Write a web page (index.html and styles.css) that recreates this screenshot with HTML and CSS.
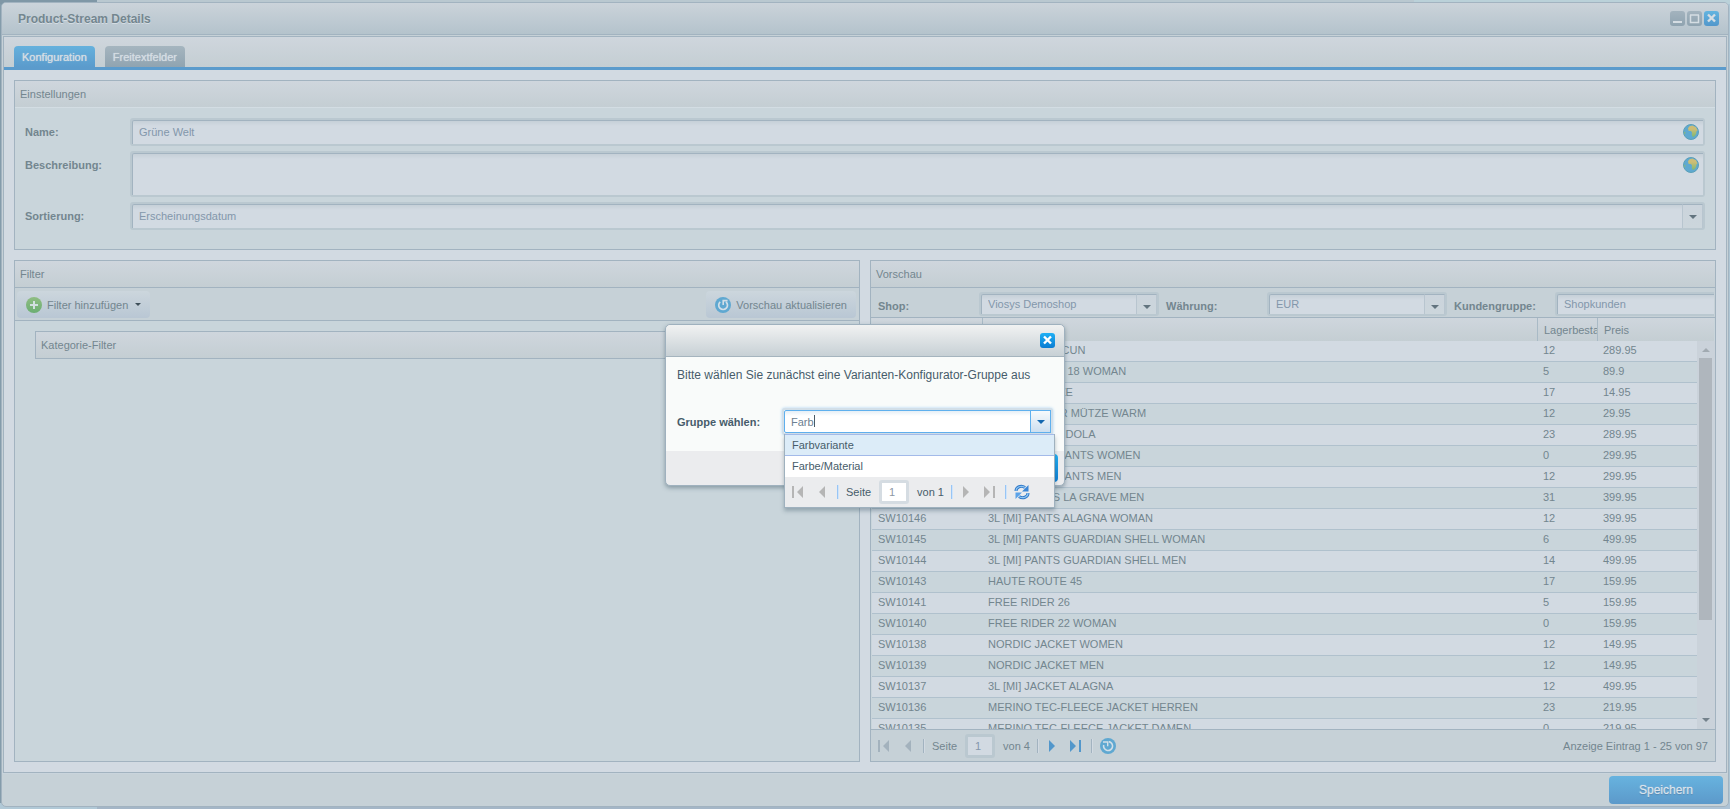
FILE: index.html
```html
<!DOCTYPE html>
<html lang="de">
<head>
<meta charset="utf-8">
<title>Product-Stream Details</title>
<link rel="stylesheet" href="styles.css">
</head>
<body>
<svg class="defs" aria-hidden="true">
  <defs>
    <linearGradient id="land" x1="0" y1="0" x2="0" y2="1"><stop offset="0.3" stop-color="#cdbd76"/><stop offset="1" stop-color="#7fb873"/></linearGradient>
    <linearGradient id="plusFill" x1="0" y1="0" x2="0" y2="1"><stop offset="0" stop-color="#8fbd83"/><stop offset="1" stop-color="#6bae72"/></linearGradient>
    <symbol id="globe" viewBox="0 0 16 16">
      <circle cx="8" cy="8" r="7.5" fill="#5fa9d0" stroke="#5b9fb8"/>
      <path d="M5 4.2 6.5 2.2 9.5 1.6 13 3.2 14.6 6.4 13.4 7.6 13.2 9.8 11.4 12.6 9.8 13 8.8 11 9 8.2 7.8 7 5.6 7Z" fill="url(#land)"/>
      <path d="M.8 7.4 2.6 8.4 1.8 11Z" fill="#86b880"/>
    </symbol>
    <symbol id="plus" viewBox="0 0 16 16"><circle cx="8" cy="8" r="8" fill="url(#plusFill)"/><path d="M8 4v8M4 8h8" stroke="#d2dfe0" stroke-width="2"/></symbol>
    <symbol id="reload" viewBox="0 0 16 16"><circle cx="8" cy="8" r="8" fill="#5fa8d1"/><path d="M11 4.800A4.400 4.400 0 1 1 5.200 4.800" fill="none" stroke="#d2dfe8" stroke-width="1.700"/><path d="M7.400 8V2.800h5.200v1.600H9V8z" fill="#d2dfe8"/></symbol>
    <symbol id="reload-left" viewBox="0 0 16 16"><circle cx="8" cy="8" r="8" fill="#5fa8d1"/><path d="M8.800 3.600A4.500 4.500 0 1 1 3.700 7" fill="none" stroke="#d2dfe8" stroke-width="1.600"/><path d="M3 3.200h5.400v5H7V4.800H3z" fill="#d2dfe8"/></symbol>
    <symbol id="down" viewBox="0 0 8 4"><path d="M0 0h8L4 4z" fill="currentColor"/></symbol>
    <symbol id="up" viewBox="0 0 8 4"><path d="M0 4h8L4 0z" fill="currentColor"/></symbol>
    <symbol id="first" viewBox="0 0 12 12"><path d="M0 0h2v12H0zM11 0v12L5 6z" fill="currentColor"/></symbol>
    <symbol id="prev" viewBox="0 0 12 12"><path d="M9 0v12L3 6z" fill="currentColor"/></symbol>
    <symbol id="next" viewBox="0 0 12 12"><path d="M3 0v12l6-6z" fill="currentColor"/></symbol>
    <symbol id="last" viewBox="0 0 12 12"><path d="M0 0v12l6-6zM9 0h2v12H9z" fill="currentColor"/></symbol>
    <symbol id="close" viewBox="0 0 15 15"><path d="M4 3.500 11 10.500M11 3.500 4 10.500" stroke="currentColor" stroke-width="2.400"/></symbol>
    <symbol id="cycle" viewBox="0 0 16 16">
      <path d="M2 7C2 3 7 .8 11 3.600" fill="none" stroke="#2f78c8" stroke-width="3"/><path d="M2 7C2 3 7 .8 11 3.600" fill="none" stroke="#8cc4f2" stroke-width="1.200"/>
      <path d="M14.500 1v6.500H8z" fill="#3b86d6"/>
      <path d="M14 9c0 4-5 6.200-9 3.400" fill="none" stroke="#2f78c8" stroke-width="3"/><path d="M14 9c0 4-5 6.200-9 3.400" fill="none" stroke="#8cc4f2" stroke-width="1.200"/>
      <path d="M1.500 15V8.500H8z" fill="#5ba2e8"/>
    </symbol>
  </defs>
</svg>

<main class="window">
  <header class="titlebar">
    <h1 class="title">Product-Stream Details</h1>
    <button class="tool" aria-label="Minimieren"><svg viewBox="0 0 15 15"><path d="M3 11h9" stroke="currentColor" stroke-width="2"/></svg></button>
    <button class="tool" aria-label="Maximieren"><svg viewBox="0 0 15 15"><path d="M3 4h9M3.500 4v7.500h8V4" fill="none" stroke="currentColor" stroke-width="1.500"/></svg></button>
    <button class="tool tool-close" aria-label="Schließen"><svg><use href="#close"/></svg></button>
  </header>

  <div class="content">
    <nav class="tabs">
      <button class="tab tab-active">Konfiguration</button>
      <button class="tab">Freitextfelder</button>
    </nav>
    <div class="page">
      <section class="panel settings">
        <h2 class="panel-head">Einstellungen</h2>
        <form class="form">
          <label for="name">Name:</label>
          <div class="field"><input id="name" type="text" value="Grüne Welt"><svg class="globe"><use href="#globe"/></svg></div>
          <label for="desc">Beschreibung:</label>
          <div class="field field-area"><textarea id="desc"></textarea><svg class="globe"><use href="#globe"/></svg></div>
          <label for="sort">Sortierung:</label>
          <div class="field"><select id="sort"><option>Erscheinungsdatum</option></select><span class="trigger"><svg><use href="#down"/></svg></span></div>
        </form>
      </section>

      <div class="columns">
        <section class="panel">
          <h2 class="panel-head">Filter</h2>
          <div class="toolbar">
            <button class="tbtn"><svg class="icon"><use href="#plus"/></svg>Filter hinzufügen<svg class="caret"><use href="#down"/></svg></button>
            <button class="tbtn"><svg class="icon"><use href="#reload"/></svg>Vorschau aktualisieren</button>
          </div>
          <div class="filters"><h3 class="panel-head filter-item">Kategorie-Filter</h3></div>
        </section>

        <section class="panel preview">
          <h2 class="panel-head">Vorschau</h2>
          <div class="selectors">
            <label for="shop">Shop:</label>
            <div class="field"><select id="shop"><option>Viosys Demoshop</option></select><span class="trigger"><svg><use href="#down"/></svg></span></div>
            <label for="currency">Währung:</label>
            <div class="field"><select id="currency"><option>EUR</option></select><span class="trigger"><svg><use href="#down"/></svg></span></div>
            <label for="group">Kundengruppe:</label>
            <div class="field field-cut"><select id="group"><option>Shopkunden</option></select></div>
          </div>
          <div class="grid">
            <table>
              <colgroup><col class="c-num"><col><col class="c-stock"><col class="c-price"></colgroup>
              <thead><tr><th>Nummer</th><th>Name</th><th>Lagerbestand</th><th>Preis</th></tr></thead>
              <tbody>
                <tr><td>SW10154</td><td>LS TOUR CANCUN</td><td>12</td><td>289.95</td></tr>
                <tr><td>SW10153</td><td>CROSS RIDER 18 WOMAN</td><td>5</td><td>89.9</td></tr>
                <tr><td>SW10152</td><td>MERINO MÜTZE</td><td>17</td><td>14.95</td></tr>
                <tr><td>SW10151</td><td>3L [MI] WINTER MÜTZE WARM</td><td>12</td><td>29.95</td></tr>
                <tr><td>SW10150</td><td>JACKETS GONDOLA</td><td>23</td><td>289.95</td></tr>
                <tr><td>SW10149</td><td>3L [MI] TOUR PANTS WOMEN</td><td>0</td><td>299.95</td></tr>
                <tr><td>SW10148</td><td>3L [MI] TOUR PANTS MEN</td><td>12</td><td>299.95</td></tr>
                <tr><td>SW10147</td><td>3L [MI] PANTS LA GRAVE MEN</td><td>31</td><td>399.95</td></tr>
                <tr><td>SW10146</td><td>3L [MI] PANTS ALAGNA WOMAN</td><td>12</td><td>399.95</td></tr>
                <tr><td>SW10145</td><td>3L [MI] PANTS GUARDIAN SHELL WOMAN</td><td>6</td><td>499.95</td></tr>
                <tr><td>SW10144</td><td>3L [MI] PANTS GUARDIAN SHELL MEN</td><td>14</td><td>499.95</td></tr>
                <tr><td>SW10143</td><td>HAUTE ROUTE 45</td><td>17</td><td>159.95</td></tr>
                <tr><td>SW10141</td><td>FREE RIDER 26</td><td>5</td><td>159.95</td></tr>
                <tr><td>SW10140</td><td>FREE RIDER 22 WOMAN</td><td>0</td><td>159.95</td></tr>
                <tr><td>SW10138</td><td>NORDIC JACKET WOMEN</td><td>12</td><td>149.95</td></tr>
                <tr><td>SW10139</td><td>NORDIC JACKET MEN</td><td>12</td><td>149.95</td></tr>
                <tr><td>SW10137</td><td>3L [MI] JACKET ALAGNA</td><td>12</td><td>499.95</td></tr>
                <tr><td>SW10136</td><td>MERINO TEC-FLEECE JACKET HERREN</td><td>23</td><td>219.95</td></tr>
                <tr><td>SW10135</td><td>MERINO TEC-FLEECE JACKET DAMEN</td><td>0</td><td>219.95</td></tr>
              </tbody>
            </table>
            <div class="scrollbar"><svg class="sb-up"><use href="#up"/></svg><div class="thumb"></div><svg class="sb-down"><use href="#down"/></svg></div>
          </div>
          <footer class="pager">
            <button aria-label="Erste Seite"><svg><use href="#first"/></svg></button>
            <button aria-label="Vorherige Seite"><svg><use href="#prev"/></svg></button>
            <i></i>
            <label for="page">Seite</label>
            <input id="page" type="text" value="1">
            <span>von 4</span>
            <i></i>
            <button class="on" aria-label="Nächste Seite"><svg><use href="#next"/></svg></button>
            <button class="on" aria-label="Letzte Seite"><svg><use href="#last"/></svg></button>
            <i></i>
            <button aria-label="Aktualisieren"><svg class="icon"><use href="#reload-left"/></svg></button>
            <span class="count">Anzeige Eintrag 1 - 25 von 97</span>
          </footer>
        </section>
      </div>
    </div>
  </div>
  <footer class="actions"><button class="save">Speichern</button></footer>
</main>

<div class="dialog" role="dialog" aria-label="Gruppe wählen">
  <header class="dialog-head"><button class="tool tool-close" aria-label="Schließen"><svg><use href="#close"/></svg></button></header>
  <div class="dialog-body">
    <p>Bitte wählen Sie zunächst eine Varianten-Konfigurator-Gruppe aus</p>
    <div class="combo-row">
      <label class="combo-label" for="variant">Gruppe wählen:</label>
      <div class="combo">
        <div class="combo-box"><input id="variant" type="text" value="Farb"><span class="cursor"></span><button aria-label="Auswahl öffnen"><svg><use href="#down"/></svg></button></div>
        <div class="list">
          <ul><li class="hover">Farbvariante</li><li>Farbe/Material</li></ul>
          <div class="pager pager-list">
            <button aria-label="Erste Seite"><svg><use href="#first"/></svg></button>
            <button aria-label="Vorherige Seite"><svg><use href="#prev"/></svg></button>
            <i></i>
            <label for="lpage">Seite</label>
            <input id="lpage" type="text" value="1">
            <span>von 1</span>
            <i></i>
            <button aria-label="Nächste Seite"><svg><use href="#next"/></svg></button>
            <button aria-label="Letzte Seite"><svg><use href="#last"/></svg></button>
            <i></i>
            <button aria-label="Aktualisieren"><svg class="icon"><use href="#cycle"/></svg></button>
          </div>
        </div>
      </div>
    </div>
  </div>
  <footer class="dialog-foot"><button class="ok" aria-label="Übernehmen"></button></footer>
</div>
</body>
</html>
```
FILE: styles.css
```css
* { box-sizing: border-box; }
html { height: 100%; }
body {
  height: 100%;
  margin: 0;
  padding: 2px 1px 2px;
  background: linear-gradient(90deg, #7f97a6 0 97px, #b9c8d0 97px 1414px, #bad1d9 1414px) top / 100% 4px no-repeat,
    linear-gradient(90deg, #b1c9d7 0 97px, #a4b6c7 97px 1630px, #adc3d6 1630px) bottom / 100% 6px no-repeat,
    linear-gradient(90deg, #849cab 0 50%, #aec6d4 50%);
  font: 11px/14px "Liberation Sans", Arial, sans-serif;
  color: #73868f;
  overflow: hidden;
}
.defs { position: absolute; width: 0; height: 0; }
button, input, select, textarea { font: inherit; color: inherit; margin: 0; padding: 0; border: 0; background: none; outline: 0; }
svg { display: block; flex: none; }
h1, h2, h3, p, ul { margin: 0; padding: 0; font-size: 11px; font-weight: normal; list-style: none; }
.icon { width: 16px; height: 16px; }

.window {
  display: flex;
  flex-direction: column;
  height: 100%;
  border: 1px solid #a2b3c0;
  border-radius: 5px;
  background: #c6d1d7;
  overflow: hidden;
}
.titlebar {
  display: flex;
  align-items: center;
  gap: 2px;
  flex: none;
  height: 32px;
  padding: 0 9px 0 16px;
  border-bottom: 1px solid #a2b3c0;
  background: linear-gradient(#cbd3da, #b4c3cc);
}
.title { flex: 1; font-size: 12px; font-weight: bold; text-shadow: 0 1px #d5dde3; }
.tool {
  width: 15px;
  height: 15px;
  border-radius: 3px;
  background: linear-gradient(#a3b3be, #8fa3b0);
  color: #d5dde3;
}
.tool svg { width: 15px; height: 15px; }
.tool-close { background: linear-gradient(#62b4e0, #5297cb); }
.content {
  display: flex;
  flex-direction: column;
  flex: 1;
  min-height: 0;
  margin: 1px 1px 0;
  border: 1px solid #a2b3c0;
  background: #d2dae2;
}
.tabs {
  display: flex;
  align-items: flex-end;
  gap: 10px;
  flex: none;
  height: 33px;
  padding: 0 10px;
  border-bottom: 3px solid #5b9bcc;
  background: linear-gradient(#cfd6dd, #c4ced3);
}
.tab {
  height: 21px;
  padding: 0 8px;
  border-radius: 4px 4px 0 0;
  background: linear-gradient(#a5b5bf, #90a4b1);
  color: #d5dde3;
  text-shadow: 0 0 1px #d5dde3;
}
.tab-active { background: linear-gradient(#65b1dd, #5b9bcc); }
.page { display: flex; flex-direction: column; gap: 10px; flex: 1; min-height: 0; padding: 10px; }
.panel { display: flex; flex-direction: column; min-width: 0; border: 1px solid #a2b3c0; background: #c9d5db; overflow: hidden; }
.panel-head {
  flex: none;
  height: 27px;
  padding: 0 5px;
  border-bottom: 1px solid #a2b3c0;
  background: linear-gradient(#cfd6dd, #c4ced3);
  line-height: 27px;
}
.settings .panel-head { border-color: #d3dde3; }
.form { display: grid; grid-template-columns: 95px 1fr; gap: 5px 10px; padding: 10px 10px 19px; }
.form label, .selectors label, .combo-label { font-weight: bold; }
.form label { padding-top: 7px; }
.field { display: flex; height: 28px; border: 2px solid #bac8d0; border-radius: 3px; background: #d2dae2; color: #8397ab; }
.field-area { height: 46px; }
.field input, .field select, .field textarea {
  flex: 1;
  min-width: 0;
  padding: 0 6px 2px;
  border: 1px solid #a2b3c0;
  border-width: 1px 0 0 1px;
  border-radius: 2px 0 0 0;
  background: linear-gradient(#c6d0d8, #d2dae2 5px);
  appearance: none;
  resize: none;
}
.globe { width: 16px; height: 16px; margin: 4px 4px 0 0; }
.field input + .globe, .field textarea + .globe { margin-left: -20px; }
.trigger {
  display: flex;
  align-items: center;
  justify-content: center;
  width: 21px;
  margin-left: -1px;
  border: 1px solid #b8c5cf;
  border-width: 1px 1px 0;
  border-top-color: #a2b3c0;
  background: linear-gradient(#cbd4dc, #ccd6dc);
  color: #62747f;
}
.trigger svg { width: 8px; height: 4px; }
.columns { display: grid; grid-template-columns: 1fr 1fr; gap: 10px; flex: 1; min-height: 0; }
.toolbar { display: flex; justify-content: space-between; flex: none; height: 33px; padding: 3px 3px 3px 2px; border-bottom: 1px solid #a2b3c0; background: #c6d1d7; }
.tbtn { display: flex; align-items: center; gap: 5px; height: 27px; padding: 0 9px; border-radius: 4px; background: linear-gradient(#ccd6dd, #b9c7d4); }
.caret { width: 6px; height: 3px; margin-left: 2px; color: #3e4f59; }
.filters { padding: 10px 10px 10px 20px; }
.filter-item { height: 28px; border: 1px solid #a2b3c0; line-height: 26px; }

.selectors {
  display: grid;
  grid-template-columns: 94px 180px 94px 180px 94px 1fr;
  column-gap: 7px;
  flex: none;
  height: 30px;
  padding: 4px 1px 0 7px;
  border-bottom: 1px solid #a2b3c0;
  background: #c6d1d7;
}
.selectors label { padding-top: 7px; }
.selectors .field { height: 24px; }
.selectors .trigger { padding-top: 5px; }
.field-cut { border-right: 0; border-radius: 3px 0 0 3px; }
.grid { position: relative; flex: 1; min-height: 0; padding: 0 1px; overflow: hidden; }
table { width: 100%; border-collapse: separate; border-spacing: 0; table-layout: fixed; }
.c-num { width: 110px; }
.c-stock { width: 60px; }
.c-price { width: 117px; }
th, td { overflow: hidden; padding: 0 6px; text-align: left; font-weight: normal; white-space: nowrap; }
th { height: 23px; border-left: 1px solid #a9bac6; background: linear-gradient(#cfd6dd, #c4ced3); }
th:nth-child(3) { padding-right: 0; }
th:first-child { border-left: 0; }
td { height: 21px; padding-bottom: 2px; border-bottom: 1px solid #b0c1cd; background: #d2dae2; }
tr:nth-child(even) td { background: #c9d5db; }
.scrollbar {
  position: absolute;
  top: 23px;
  right: 0;
  bottom: 0;
  display: flex;
  flex-direction: column;
  width: 18px;
  padding: 7px 3px 7px 2px;
  background: #cad2da;
  color: #a1aab1;
}
.scrollbar svg { width: 8px; height: 4px; margin-left: 3px; }
.thumb { height: 262px; margin: 6px 0 auto; background: #afb6bd; }
.sb-down { color: #74828c; }

.pager { display: flex; align-items: center; flex: none; height: 32px; padding: 0 7px; border-top: 1px solid #a2b3c0; background: #c6d1d7; white-space: nowrap; }
.pager button { margin-right: 9px; color: #a3b2bd; }
.pager button + button { margin-left: 3px; }
.pager button svg:not(.icon) { width: 12px; height: 12px; }
.pager .on { color: #5297cb; }
.pager i { width: 2px; height: 14px; margin-right: 7px; border-left: 1px solid #a2b3c0; border-right: 1px solid #d2dae2; }
.pager input { width: 30px; height: 24px; margin: 0 8px; padding: 0 7px; border: 3px solid #bac8d0; border-radius: 3px; background: #d2dae2; color: #8397ab; }
.pager span { margin-right: 7px; }
.pager .count { margin: 0 0 0 auto; }
.actions { display: flex; justify-content: flex-end; flex: none; height: 33px; padding: 2px 5px; border-top: 1px solid #c9d4dc; }
.save { width: 114px; height: 28px; border-radius: 4px; background: linear-gradient(#67b3df, #5c99ca); color: #dbe4ec; font-size: 12px; text-shadow: 0 1px 1px #5283ad, 0 0 1px #dbe4ec; }

.dialog {
  position: absolute;
  top: 324px;
  left: calc(50% - 200px);
  width: 400px;
  border: 1px solid #9fb1be;
  border-radius: 5px;
  background: #ebecee;
  color: #475c6a;
  box-shadow: 0 2px 4px rgba(70, 95, 110, 0.5);
}
.dialog-head {
  display: flex;
  align-items: center;
  justify-content: flex-end;
  height: 32px;
  padding: 0 9px;
  border-bottom: 1px solid #a5b4be;
  border-radius: 5px 5px 0 0;
  background: linear-gradient(#f1f2f2, #c7d0d5);
}
.dialog .tool-close { background: linear-gradient(#1fb0f5, #0a7cd2); color: #fff; }
.dialog-body { height: 94px; padding: 11px 11px 0; background: #f9fbfa; }
.dialog-body p { font-size: 12px; line-height: 15px; }
.combo-row { display: flex; justify-content: space-between; margin-top: 25px; }
.combo-label { padding-top: 7px; }
.combo { position: relative; width: 271px; }
.combo-box { display: flex; height: 27px; border: 2px solid #d3dfe8; border-radius: 3px; background: #fff; box-shadow: 0 0 3px #a9d2f3; }
.combo-box input { width: 247px; padding: 0 6px; border: 1px solid #5fb0ee; border-radius: 2px 0 0 2px; background: linear-gradient(#e6eff6, #fff 5px); color: #6d7f92; }
.combo-box button { display: flex; align-items: center; justify-content: center; flex: 1; margin-left: -1px; border: 1px solid #5fb0ee; background: linear-gradient(#f7fafc, #cddff0); color: #1468b0; }
.combo-box button svg { width: 8px; height: 4px; }
.cursor { position: absolute; left: 32px; top: 7px; width: 1px; height: 12px; background: #4a5a66; }
.list { position: absolute; top: 26px; left: 2px; width: 271px; border: 1px solid #9fb1be; border-top: 0; background: #fff; box-shadow: 0 3px 4px rgba(70, 95, 110, 0.4); z-index: 1; }
.list li { height: 21px; padding: 0 7px; line-height: 21px; }
.list .hover { height: 22px; border-top: 1px solid #a3bae9; border-bottom: 1px solid #a3bae9; background: #dcecf8; line-height: 20px; }
.pager-list { height: 30px; border-top: 0; background: #ebecee; color: #475c6a; }
.pager-list button { color: #b5b5b5; }
.pager-list i { border-left-color: #98c5f5; border-right-color: #d0e4fa; }
.pager-list input { border-color: #d5dce2; background: #fff; color: #8c98a3; }
.dialog-foot { display: flex; justify-content: flex-end; height: 34px; padding: 3px 6px; }
.ok { width: 90px; height: 28px; border-radius: 4px; background: linear-gradient(#1fb0f5, #0a7cd2); }
```
